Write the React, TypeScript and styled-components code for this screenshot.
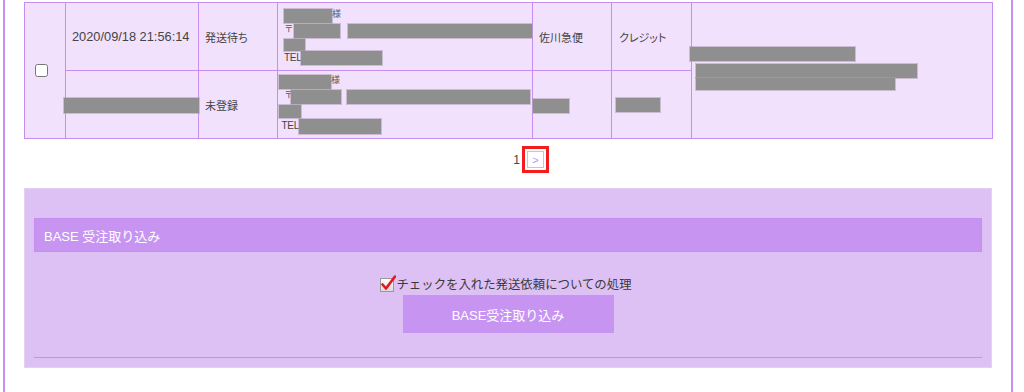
import React from 'react';
import styled, { createGlobalStyle } from 'styled-components';

const GlobalStyle = createGlobalStyle`
  body {
    margin: 0;
    background: #ffffff;
    font-family: "Liberation Sans", "Noto Sans CJK JP", sans-serif;
    color: #444;
  }
`;

const Frame = styled.div`
  margin-left: 3px;
  width: 968px;
  height: 392px;
  border-left: 2px solid #c990f2;
  border-right: 2px solid #c990f2;
  padding: 2px 19px 0 19px;
  box-sizing: content-box;
  overflow: hidden;
`;

const OrderTable = styled.table`
  width: 968px;
  border-collapse: collapse;
  table-layout: fixed;
  background: #f1e1fd;
  font-size: 11px;
  font-feature-settings: "palt";
`;

const Cell = styled.td<{ $pad?: number }>`
  border: 1px solid #c68ef0;
  padding: 0 ${p => p.$pad ?? 6}px;
  height: 67px;
  vertical-align: middle;
  color: #444;
  white-space: nowrap;
  overflow: visible;
`;

const DateText = styled.span`
  font-size: 12.8px;
`;

const RowCheck = styled.input`
  margin: 0 0 0 4px;
  width: 13px;
  height: 13px;
  display: block;
`;

const Redact = styled.span<{ $w: number; $h: number; $ml?: number; $mt?: number }>`
  display: inline-block;
  flex: none;
  width: ${p => p.$w}px;
  height: ${p => p.$h}px;
  margin-left: ${p => p.$ml ?? 0}px;
  margin-top: ${p => p.$mt ?? 0}px;
  background: #8f8f8f;
  box-shadow: 0 0 0 1px rgba(170, 160, 175, 0.55);
  vertical-align: middle;
`;

const Address = styled.div`
  display: flex;
  flex-direction: column;
`;

const AddrLine = styled.div<{ $h: number }>`
  display: flex;
  align-items: flex-start;
  height: ${p => p.$h}px;
`;

const Small = styled.span<{ $ml?: number }>`
  font-size: 9px;
  line-height: 11px;
  margin-left: ${p => p.$ml ?? 0}px;
  color: #555;
`;

const Tel = styled.span`
  font-size: 10px;
  line-height: 14px;
  color: #444;
  letter-spacing: -0.3px;
`;

const NoteBlock = styled.div`
  display: flex;
  flex-direction: column;
  transform: translateY(-2px);
`;

const Pager = styled.div`
  display: flex;
  justify-content: center;
  align-items: center;
  height: 49px;
  padding-left: 41px;
  font-size: 12px;
  color: #444;
  transform: translateY(-4px);
`;

const PageNum = styled.span`
  margin-right: 2px;
`;

const NextLink = styled.a`
  display: flex;
  align-items: center;
  justify-content: center;
  width: 15px;
  height: 15px;
  border: 1px solid #d9b6f6;
  color: #c68ef0;
  font-size: 11px;
  text-decoration: none;
  outline: 3px solid #f21d1d;
  outline-offset: 2px;
  margin-left: 5px;
`;

const Panel = styled.section`
  width: 948px;
  background: #dec1f4;
  border: 1px solid #e4cff6;
  padding: 29px 9px 9px;
`;

const PanelTitle = styled.h2`
  margin: 0;
  height: 34px;
  background: #c794f2;
  border: 1px solid #c68ef0;
  box-sizing: border-box;
  display: flex;
  align-items: center;
  padding-left: 9px;
  color: #ffffff;
  font-size: 13px;
  font-weight: normal;
`;

const PanelBody = styled.div`
  display: flex;
  flex-direction: column;
  align-items: center;
  padding-top: 23px;
`;

const CheckLabel = styled.label`
  display: flex;
  align-items: flex-end;
  font-size: 12.4px;
  color: #3a3a3a;
  height: 18px;
  margin-left: -4px;
`;

const CheckIcon = styled.svg`
  width: 16px;
  height: 18px;
  flex: none;
`;

const ImportButton = styled.button`
  margin-top: 2px;
  width: 211px;
  height: 38px;
  border: none;
  background: #c794f2;
  color: #ffffff;
  font-size: 13px;
  font-family: inherit;
`;

const Rule = styled.hr`
  width: 100%;
  margin: 24px 0 0;
  border: none;
  border-top: 1px solid #c68ef0;
`;

export default function App() {
  return (
    <>
      <GlobalStyle />
      <Frame>
        <OrderTable>
          <colgroup>
            <col width={41} />
            <col width={133} />
            <col width={79} />
            <col width={255} />
            <col width={79} />
            <col width={80} />
            <col width={301} />
          </colgroup>
          <tbody>
            <tr>
              <Cell rowSpan={2} $pad={6}>
                <RowCheck type="checkbox" />
              </Cell>
              <Cell>
                <DateText>2020/09/18 21:56:14</DateText>
              </Cell>
              <Cell>発送待ち</Cell>
              <Cell $pad={6}>
                <Address>
                  <AddrLine $h={15}>
                    <Redact $w={48} $h={14} />
                    <Small>様</Small>
                  </AddrLine>
                  <AddrLine $h={15}>
                    <Small $ml={1}>〒</Small>
                    <Redact $w={46} $h={14} $ml={1} />
                    <Redact $w={184} $h={14} $ml={8} />
                  </AddrLine>
                  <AddrLine $h={12}>
                    <Redact $w={21} $h={12} />
                  </AddrLine>
                  <AddrLine $h={14}>
                    <Tel>TEL</Tel>
                    <Redact $w={81} $h={14} />
                  </AddrLine>
                </Address>
              </Cell>
              <Cell>佐川急便</Cell>
              <Cell $pad={7}>クレジット</Cell>
              <Cell rowSpan={2} $pad={0}>
                <NoteBlock>
                  <Redact $w={165} $h={14} $ml={-2} />
                  <Redact $w={221} $h={14} $ml={4} $mt={3} />
                  <Redact $w={199} $h={12} $ml={4} />
                </NoteBlock>
              </Cell>
            </tr>
            <tr>
              <Cell $pad={0}>
                <Redact $w={135} $h={15} $ml={-2} $mt={2} />
              </Cell>
              <Cell>未登録</Cell>
              <Cell $pad={1}>
                <Address>
                  <AddrLine $h={15}>
                    <Redact $w={52} $h={14} />
                    <Small>様</Small>
                  </AddrLine>
                  <AddrLine $h={15}>
                    <Small $ml={6}>〒</Small>
                    <Redact $w={50} $h={14} $ml={-2} />
                    <Redact $w={183} $h={14} $ml={6} />
                  </AddrLine>
                  <AddrLine $h={14}>
                    <Redact $w={22} $h={13} />
                  </AddrLine>
                  <AddrLine $h={15}>
                    <Tel>&nbsp;TEL</Tel>
                    <Redact $w={82} $h={15} />
                  </AddrLine>
                </Address>
              </Cell>
              <Cell $pad={0}>
                <Redact $w={36} $h={14} $mt={2} />
              </Cell>
              <Cell $pad={4}>
                <Redact $w={44} $h={14} />
              </Cell>
            </tr>
          </tbody>
        </OrderTable>

        <Pager>
          <PageNum>1</PageNum>
          <NextLink href="#">&gt;</NextLink>
        </Pager>

        <Panel>
          <PanelTitle>BASE 受注取り込み</PanelTitle>
          <PanelBody>
            <CheckLabel>
              <CheckIcon viewBox="0 0 16 18">
                <defs>
                  <linearGradient id="boxGrad" x1="0" y1="0" x2="0" y2="1">
                    <stop offset="0" stopColor="#ffffff" />
                    <stop offset="1" stopColor="#d8d8d8" />
                  </linearGradient>
                </defs>
                <rect x="0.5" y="3.5" width="13" height="13" fill="url(#boxGrad)" stroke="#9a9a9a" />
                <path d="M2.5 9.5 L6 13.5 L15 1.5" fill="none" stroke="#e3161b" strokeWidth="2.6" strokeLinecap="round" strokeLinejoin="round" />
              </CheckIcon>
              チェックを入れた発送依頼についての処理
            </CheckLabel>
            <ImportButton type="button">BASE受注取り込み</ImportButton>
            <Rule />
          </PanelBody>
        </Panel>
      </Frame>
    </>
  );
}
